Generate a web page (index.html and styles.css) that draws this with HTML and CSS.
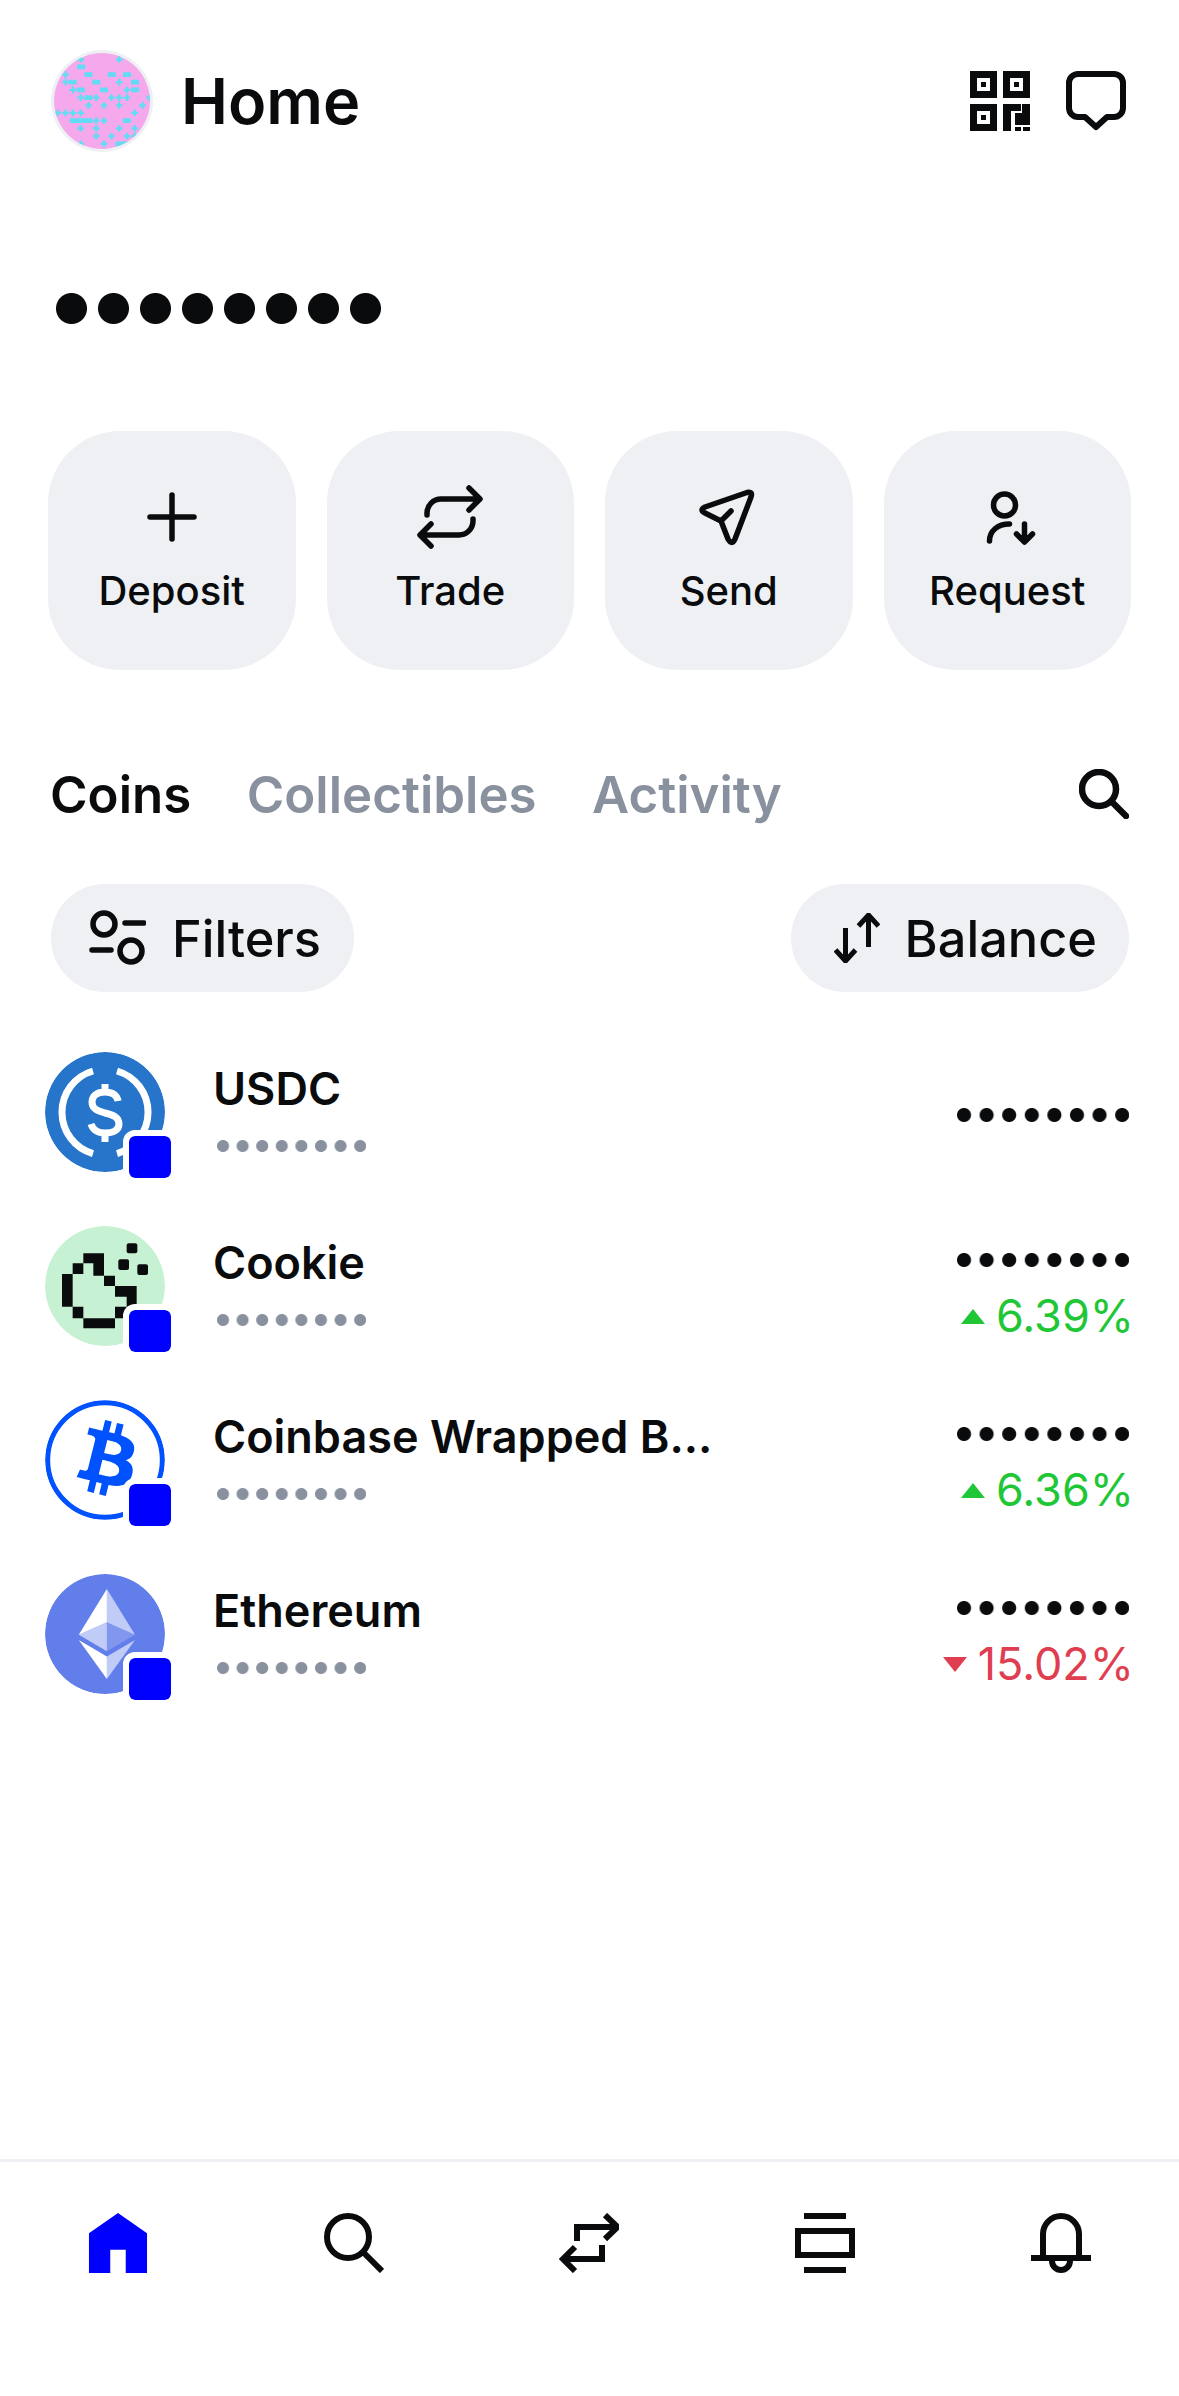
FILE: index.html
```html
<!DOCTYPE html>
<html lang="en">
<head>
<meta charset="utf-8">
<title>Home</title>
<link rel="stylesheet" href="styles.css">
</head>
<body>
<div class="app">
  <header class="header">
    <svg class="avatar" viewBox="155 90 302 302">
      <defs><clipPath id="avclip"><circle cx="306" cy="241" r="142"/></clipPath></defs>
      <circle cx="306" cy="241" r="142" fill="#f5a9ec"/>
      <g clip-path="url(#avclip)" fill="none" stroke="#62dcf4">
        <path stroke-width="7" d="M233 118h20M243 108v20M347 118h20M357 108v20M188 163h20M198 153v20M188 185h20M198 175v20M347 185h20M357 175v20M210 208h20M220 198v20M370 208h20M380 198v20M233 231h20M243 221v20M279 231h20M289 221v20M324 231h20M334 221v20M347 231h20M357 221v20M370 231h20M380 221v20M437 231h20M447 221v20M256 254h20M266 244v20M302 254h20M312 244v20M347 254h20M357 244v20M416 254h20M426 244v20M165 276h20M175 266v20M188 276h20M198 266v20M210 276h20M220 266v20M233 276h20M243 266v20M393 276h20M403 266v20M279 299h20M289 289v20M302 299h20M312 289v20M233 322h20M243 312v20M279 322h20M289 312v20M347 322h20M357 312v20M393 322h20M403 312v20M279 345h20M289 335v20M324 345h20M334 335v20M370 345h20M380 335v20M393 345h20M403 335v20M233 368h20M243 358v20M302 368h20M312 358v20"/>
        <path stroke-width="14" d="M232 140h24M254 163h24M323 163h24M368 163h24M207 185h24M277 185h24M392 185h24M231 208h24M300 208h24M392 208h24M254 231h24M210 299h68M368 299h24M346 368h36"/>
      </g>
    </svg>
    <h1 class="title">Home</h1>
    <div class="header-icons">
      <svg class="icon-60" viewBox="0 0 60 60">
        <path fill-rule="evenodd" fill="#0a0b0d" d="M0 0h27v27H0zM7 7v13h13V7zM11 11h5v5h-5zM33 0h27v27H33zM40 7v13h13V7zM44 11h5v5h-5zM0 33h27v27H0zM7 40v13h13V40zM11 44h5v5h-5zM33 33h18v7H41v20h-8zM45 42h7v-9h8v21H45zM45 56h6v4h-6zM53 56h7v4h-7z"/>
      </svg>
      <svg class="icon-60" viewBox="0 0 60 60">
        <path fill="none" stroke="#0a0b0d" stroke-width="6" stroke-linejoin="round" d="M12 3h36a9 9 0 0 1 9 9v25a9 9 0 0 1-9 9h-7L30 56 19 46h-7a9 9 0 0 1-9-9V12a9 9 0 0 1 9-9z"/>
      </svg>
    </div>
  </header>

  <div class="dots dots-balance" aria-label="hidden balance"></div>

  <div class="actions">
    <div class="action">
      <svg class="action-icon" viewBox="0 0 68 64"><path d="M34 10v44M12 32h44"/></svg>
      <span class="action-label">Deposit</span>
    </div>
    <div class="action">
      <svg class="action-icon" viewBox="0 0 68 64"><path d="M11 30v-2a14 14 0 0 1 14-14h38M53 3l11 11-11 11M57 34v2a14 14 0 0 1-14 14H5M15 39 4 50l11 11"/></svg>
      <span class="action-label">Trade</span>
    </div>
    <div class="action">
      <svg class="action-icon" viewBox="-2 -4 68 64"><path d="M50 3.500 8 18q-6 3 0 6l16 8 7 18q4 7 7 0L54 8q2-6-4-4.500zM24 32l10-10"/></svg>
      <span class="action-label">Send</span>
    </div>
    <div class="action">
      <svg class="action-icon" viewBox="-10.500 -4 68 64"><circle cx="21" cy="16" r="11"/><path d="M6 52c0-10 8-17 20-17M41 35v18M33 45l8 8 8-8"/></svg>
      <span class="action-label">Request</span>
    </div>
  </div>

  <div class="tabs">
    <span class="tab tab-active">Coins</span>
    <span class="tab">Collectibles</span>
    <span class="tab">Activity</span>
    <svg class="tab-search" viewBox="0 0 50 50"><circle cx="20" cy="20" r="17"/><path d="m33 33 14 14"/></svg>
  </div>

  <div class="pills">
    <div class="pill pill-filters">
      <svg class="pill-icon" viewBox="0 0 58 58"><circle cx="16" cy="15" r="11"/><circle cx="43" cy="42" r="11"/><path d="M37 14h19M4 41h19"/></svg>
      <span>Filters</span>
    </div>
    <div class="pill pill-balance">
      <svg class="pill-icon-sort" viewBox="0 0 46 50"><path d="M11.500 15v32M1.500 37l10 11 10-11M34.500 2v32M24.500 13l10-11 10 11"/></svg>
      <span>Balance</span>
    </div>
  </div>

  <div class="list">
    <div class="row">
      <div class="coin">
        <svg class="coin-logo" viewBox="0 0 120 120">
          <circle cx="60" cy="60" r="60" fill="#2775ca"/>
          <g fill="none" stroke="#fff" stroke-width="7">
            <path d="M48 19a43 43 0 0 0 0 82.600M72 19a43 43 0 0 1 0 82.600"/>
            <path d="M73 49c-1-6-6-9-13-9-8 0-13 4-13 10 0 7 6 9 13 11 8 2 14 4 14 11 0 6-6 9-14 9-7 0-12-3-14-9M60 32v8M60 81v9"/>
          </g>
        </svg>
        <span class="badge"></span>
      </div>
      <div class="info">
        <div class="name">USDC</div>
        <div class="dots dots-sub"></div>
      </div>
      <div class="values values-solo">
        <div class="dots dots-value"></div>
      </div>
    </div>

    <div class="row">
      <div class="coin">
        <svg class="coin-logo" viewBox="45 48 360 360">
          <circle cx="225" cy="228" r="180" fill="#c6f1d2"/>
          <path fill="#0a0b0d" d="M160 130h62v30h-62zM128 160h32v32h-32zM190 160h32v37h-32zM96 192h32v98H96zM222 197h33v31h-33zM255 228h65v32h-65zM290 260h30v30h-30zM255 290h35v35h-35zM128 290h32v35h-32zM160 325h95v30h-95z"/>
          <rect x="290" y="100" width="32" height="30" rx="6" fill="#0a0b0d"/>
          <rect x="265" y="148" width="32" height="32" rx="6" fill="#0a0b0d"/>
          <rect x="322" y="163" width="32" height="32" rx="6" fill="#0a0b0d"/>
        </svg>
        <span class="badge"></span>
      </div>
      <div class="info">
        <div class="name">Cookie</div>
        <div class="dots dots-sub"></div>
      </div>
      <div class="values">
        <div class="dots dots-value"></div>
        <div class="change change-up"><i class="tri tri-up"></i>6.39%</div>
      </div>
    </div>

    <div class="row">
      <div class="coin">
        <svg class="coin-logo" viewBox="45 570 360 360">
          <circle cx="225" cy="750" r="172" fill="#fff" stroke="#0052ff" stroke-width="15"/>
          <path transform="translate(53 567) scale(15)" fill="#0052ff" fill-rule="evenodd" d="M17.288 10.291c.24-1.59-.974-2.45-2.64-3.03l.54-2.153-1.315-.33-.525 2.107c-.345-.087-.705-.167-1.064-.25l.526-2.127-1.32-.33-.54 2.165c-.285-.067-.565-.132-.84-.2l-1.815-.45-.35 1.407s.975.225.955.236c.535.136.63.486.615.766l-1.477 5.92c-.075.166-.24.406-.614.314.015.02-.96-.24-.96-.24l-.66 1.51 1.71.426.93.242-.54 2.19 1.32.327.54-2.17c.36.1.705.19 1.05.273l-.51 2.154 1.32.33.545-2.19c2.24.427 3.93.257 4.64-1.774.57-1.637-.03-2.58-1.217-3.196.854-.193 1.5-.76 1.68-1.93h.01zm-3.01 4.22c-.404 1.64-3.157.75-4.05.53l.72-2.9c.896.23 3.757.67 3.33 2.37zm.41-4.24c-.37 1.49-2.662.735-3.405.55l.654-2.64c.744.18 3.137.524 2.75 2.084v.006z"/>
        </svg>
        <span class="badge"></span>
      </div>
      <div class="info">
        <div class="name">Coinbase Wrapped B...</div>
        <div class="dots dots-sub"></div>
      </div>
      <div class="values">
        <div class="dots dots-value"></div>
        <div class="change change-up"><i class="tri tri-up"></i>6.36%</div>
      </div>
    </div>

    <div class="row">
      <div class="coin">
        <svg class="coin-logo" viewBox="0 0 32 32">
          <circle cx="16" cy="16" r="16" fill="#627eea"/>
          <g fill="#fff">
            <path fill-opacity=".6" d="M16.500 4v8.870l7.500 3.350z"/>
            <path d="M16.500 4 9 16.220l7.500-3.350z"/>
            <path fill-opacity=".6" d="M16.500 21.970V28L24 17.620z"/>
            <path d="M16.500 28v-6.030L9 17.620z"/>
            <path fill-opacity=".2" d="m16.500 20.570 7.500-4.350-7.500-3.350z"/>
            <path fill-opacity=".6" d="m9 16.220 7.500 4.350v-7.700z"/>
          </g>
        </svg>
        <span class="badge"></span>
      </div>
      <div class="info">
        <div class="name">Ethereum</div>
        <div class="dots dots-sub"></div>
      </div>
      <div class="values">
        <div class="dots dots-value"></div>
        <div class="change change-down"><i class="tri tri-down"></i>15.02%</div>
      </div>
    </div>
  </div>

  <nav class="nav">
    <div class="nav-item">
      <svg class="icon-60" viewBox="0 0 60 62"><path fill="#0000ff" fill-rule="evenodd" d="M30 0l30 21v41H38V38H22v24H0V21z"/></svg>
    </div>
    <div class="nav-item">
      <svg class="nav-stroke" viewBox="0 0 60 60"><circle cx="24" cy="24" r="21"/><path d="m38 38 20 20"/></svg>
    </div>
    <div class="nav-item">
      <svg class="nav-stroke" viewBox="0 0 60 60"><path d="M18 28V14h39M46 2l12.500 12L46 26M43 32v14H6M16 34 4 46l12 12"/></svg>
    </div>
    <div class="nav-item">
      <svg class="nav-stroke" viewBox="0 0 60 60"><path d="M9 3h42M9 57h42M3 18h54v24H3z"/></svg>
    </div>
    <div class="nav-item">
      <svg class="nav-stroke" viewBox="0 0 60 60"><path d="M12 45V21a18 18 0 0 1 36 0v24M0 45h60M21 48a9 9 0 0 0 18 0"/></svg>
    </div>
  </nav>
</div>
</body>
</html>
```

FILE: styles.css
```css
* { box-sizing: border-box; }
html, body { margin: 0; padding: 0; background: #fff; }
body { font-family: Inter, "Liberation Sans", sans-serif; color: #0a0b0d; }
svg { display: block; flex: none; }

.app { width: 1179px; height: 2396px; display: flex; flex-direction: column; overflow: hidden; }

.header { display: flex; align-items: center; padding: 50px 53px 0 51px; }
.avatar { width: 102px; height: 102px; border-radius: 50%; background: #eef0f3; }
.title { margin: 0 0 0 28px; font-size: 63px; line-height: 102px; font-weight: 600; }
.header-icons { margin-left: auto; display: flex; gap: 36px; }
.icon-60 { width: 60px; height: 60px; }

.dots {
  width: calc(var(--n, 8) * var(--p) - var(--p) + var(--d));
  height: var(--d);
  background: radial-gradient(circle at calc(var(--d) / 2) calc(var(--d) / 2), var(--c, #0a0b0d) calc(var(--d) / 2 - 0.5px), transparent calc(var(--d) / 2 + 0.5px)) 0 0 / var(--p) var(--d) repeat-x;
}
.dots-balance { --d: 31px; --p: 42px; margin: 141px 0 0 56px; }
.dots-sub { --d: 12px; --p: 19.6px; --c: #8a919e; margin: 21px 0 0 4px; }
.dots-value { --d: 14px; --p: 22.6px; }

.actions { display: grid; grid-template-columns: repeat(4, 1fr); gap: 31px; margin: 107px 48px 0; }
.action { height: 239px; border-radius: 72px; background: #eef0f3; display: flex; flex-direction: column; align-items: center; padding-top: 54px; }
.action-icon { width: 68px; height: 64px; fill: none; stroke: #0a0b0d; stroke-width: 5.5; stroke-linecap: round; stroke-linejoin: round; }
.action-label { margin-top: 18px; font-size: 40px; line-height: 48px; font-weight: 500; }

.tabs { display: flex; align-items: center; height: 60px; margin-top: 94px; padding: 2px 50px 0; gap: 55.5px; }
.tab { font-size: 51px; line-height: 60px; font-weight: 600; color: #8a919e; }
.tab-active { color: #0a0b0d; }
.tab-search { margin: -2px 0 0 auto; width: 50px; height: 50px; fill: none; stroke: #0a0b0d; stroke-width: 6.5; stroke-linecap: round; }

.pills { display: flex; justify-content: space-between; margin-top: 60px; padding: 0 50px 0 51px; }
.pill { height: 108px; border-radius: 54px; background: #eef0f3; display: flex; align-items: center; font-size: 50.5px; font-weight: 450; }
.pill-filters { padding: 0 33px 0 37px; gap: 26px; }
.pill-balance { padding: 0 32px 0 43px; gap: 25px; }
.pill-icon { width: 58px; height: 58px; fill: none; stroke: #0a0b0d; stroke-width: 5.5; stroke-linecap: round; }
.pill-icon-sort { width: 46px; height: 50px; fill: none; stroke: #0a0b0d; stroke-width: 5; }

.list { display: flex; flex-direction: column; gap: 54px; margin-top: 60px; padding: 0 50px 0 45px; }
.row { display: flex; height: 120px; }
.coin { position: relative; width: 120px; height: 120px; flex: none; }
.coin-logo { width: 120px; height: 120px; border-radius: 50%; }
.badge { position: absolute; left: 78px; top: 78px; width: 54px; height: 54px; border: 6px solid #fff; border-radius: 12px; background: #0000ff; background-clip: padding-box; }
.info { margin-left: 48px; padding-top: 7px; }
.name { font-size: 45px; line-height: 60px; font-weight: 580; }
.values { margin-left: auto; padding-top: 27px; display: flex; flex-direction: column; align-items: flex-end; }
.values-solo { padding-top: 56px; }
.change { display: flex; align-items: center; margin: 19px -5px 0 0; font-size: 45px; line-height: 60px; font-weight: 400; }
.change-up { color: #1fc736; }
.change-down { color: #df3e50; }
.tri { width: 0; height: 0; margin-right: 11px; border-left: 12px solid transparent; border-right: 12px solid transparent; }
.tri-up { border-bottom: 15px solid #1fc736; }
.tri-down { border-top: 15px solid #df3e50; }

.nav { margin-top: auto; height: 237px; border-top: 3px solid #eef0f3; display: flex; padding-top: 51px; }
.nav-item { flex: 1; display: flex; justify-content: center; }
.nav-stroke { width: 60px; height: 60px; fill: none; stroke: #0a0b0d; stroke-width: 6; }
```
